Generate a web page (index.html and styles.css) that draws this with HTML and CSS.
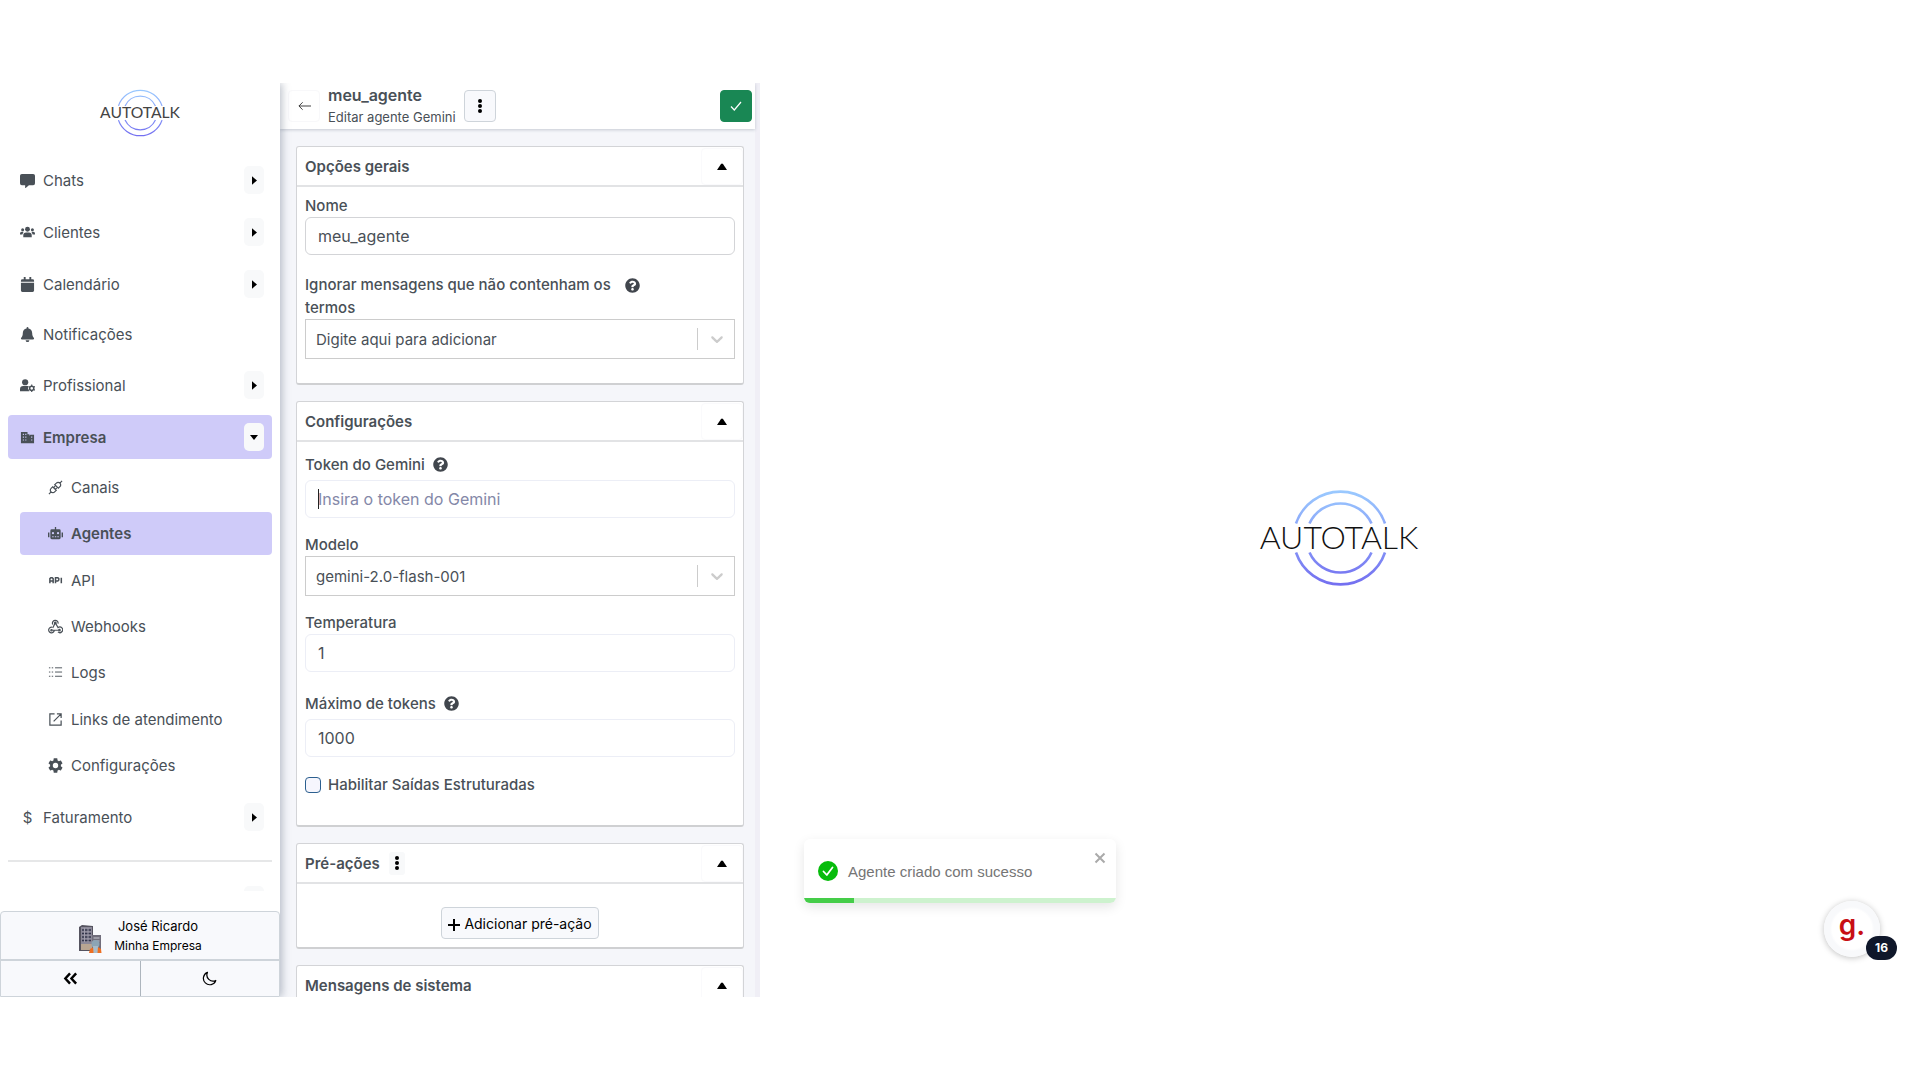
FILE: index.html
```html
<!DOCTYPE html>
<html lang="pt-BR">
<head>
  <meta charset="UTF-8" />
  <meta name="viewport" content="width=device-width, initial-scale=1.0"/>
  <title>Autotalk - Editar agente</title>
  <link rel="stylesheet" href="styles.css">
</head>
<body>

<!-- shared shapes -->
<svg class="defs" width="0" height="0" aria-hidden="true">
  <defs>
    <linearGradient id="ring" gradientUnits="userSpaceOnUse" x1="0" y1="0" x2="0" y2="98">
      <stop offset="0" stop-color="#9bcbff"/>
      <stop offset="1" stop-color="#736df0"/>
    </linearGradient>
  </defs>
  <symbol id="right" viewBox="0 0 6 10"><path d="M0 0v10l6-5z"/></symbol>
  <symbol id="down" viewBox="0 0 10 6"><path d="M0 0h10L5 6z"/></symbol>
  <symbol id="up" viewBox="0 0 10 7"><path d="M0 7h10L6 1Q5 0 4 1z"/></symbol>
  <symbol id="dots" viewBox="0 0 4 14"><circle cx="2" cy="2" r="2"/><circle cx="2" cy="7" r="2"/><circle cx="2" cy="12" r="2"/></symbol>
  <symbol id="chevron" viewBox="0 0 20 20"><path d="M4.516 7.548c0.436-0.446 1.043-0.481 1.576 0l3.908 3.747 3.908-3.747c0.533-0.481 1.141-0.446 1.574 0 0.436 0.445 0.408 1.197 0 1.615-0.406 0.418-4.695 4.502-4.695 4.502-0.217 0.223-0.502 0.335-0.787 0.335s-0.570-0.112-0.789-0.335c0 0-4.287-4.084-4.695-4.502s-0.436-1.170 0-1.615z"/></symbol>
  <symbol id="help" viewBox="0 0 512 512"><path d="M504 256c0 137-111 248-248 248S8 393 8 256 119 8 256 8s248 111 248 248zM262.700 90c-54.500 0-89.300 23-116.500 63.800-3.500 5.300-2.400 12.400 2.700 16.300l34.700 26.300c5.200 3.900 12.600 3 16.700-2.100 17.900-22.700 30.100-35.800 57.300-35.800 20.400 0 45.700 13.100 45.700 33 0 15-12.400 22.700-32.500 34C247.100 238.500 216 254.900 216 296v4c0 6.600 5.400 12 12 12h56c6.600 0 12-5.400 12-12v-1.300c0-28.500 83.200-29.600 83.200-106.700 0-58-60.200-102-116.500-102zM256 338c-25.400 0-46 20.600-46 46s20.600 46 46 46 46-20.600 46-46-20.600-46-46-46z"/></symbol>
  <symbol id="gear" viewBox="2 2 20 20"><path d="M19.140 12.940c.04-.3.060-.61.060-.94s-.02-.64-.07-.94l2.030-1.580c.18-.14.23-.41.120-.61l-1.920-3.320c-.12-.22-.37-.29-.59-.22l-2.390.96c-.5-.38-1.030-.7-1.620-.94l-.36-2.540c-.04-.24-.24-.41-.48-.41h-3.840c-.24 0-.43.17-.47.410l-.36 2.540c-.59.24-1.130.57-1.620.94l-2.390-.96c-.22-.08-.47 0-.59.220L2.740 8.870c-.12.21-.08.47.120.610l2.030 1.580c-.05.3-.09.63-.09.940s.02.640.07.940l-2.030 1.580c-.18.140-.23.410-.12.610l1.920 3.320c.12.220.370.290.590.220l2.390-.96c.5.380 1.030.700 1.620.940l.36 2.540c.05.240.240.410.480.410h3.840c.240 0 .440-.17.470-.41l.36-2.540c.59-.24 1.130-.56 1.620-.94l2.390.96c.220.080.470 0 .590-.22l1.920-3.320c.12-.22.070-.47-.12-.61l-2.010-1.580zM12 15.600a3.600 3.600 0 1 1 0-7.200 3.600 3.600 0 0 1 0 7.200z"/></symbol>
</svg>

<div class="app">
  <aside class="sidebar">
    <a class="brand" href="#" aria-label="Autotalk">
      <svg class="logo" viewBox="0 0 160 98">
        <path fill="none" stroke="url(#ring)" stroke-width="2.6" d="M36 34.500a47 47 0 0 1 89 0M49.500 34.500a34 34 0 0 1 62 0M36 63.500a47 47 0 0 0 89 0M49.500 63.500a34 34 0 0 0 62 0"/>
        <text x="80" y="60" text-anchor="middle" class="logo-text small">AUTOTALK</text>
      </svg>
    </a>

    <nav class="menu">
      <div class="item">
        <a href="#"><svg class="icon" viewBox="0 0 16 16"><path d="M2 1h12a2 2 0 0 1 2 2v8a2 2 0 0 1-2 2H9.500L5.500 16.500V13H2a2 2 0 0 1-2-2V3a2 2 0 0 1 2-2z"/></svg>Chats</a>
        <button class="toggle" aria-label="Abrir Chats"><svg class="tri"><use href="#right"/></svg></button>
      </div>
      <div class="item">
        <a href="#"><svg class="icon" viewBox="0 0 16 16"><circle cx="8" cy="4.500" r="2.600"/><circle cx="2.800" cy="5" r="1.600"/><circle cx="13.200" cy="5" r="1.600"/><path d="M3.500 13v-2a3 3 0 0 1 3-3h3a3 3 0 0 1 3 3v2zM0 10V9a1.800 1.800 0 0 1 1.800-1.800h2L2.500 10zM16 10V9a1.800 1.800 0 0 0-1.800-1.800h-2L13.500 10z"/></svg>Clientes</a>
        <button class="toggle" aria-label="Abrir Clientes"><svg class="tri"><use href="#right"/></svg></button>
      </div>
      <div class="item">
        <a href="#"><svg class="icon" viewBox="0 0 16 16"><path d="M1 5V4a1.500 1.500 0 0 1 1.500-1.500H4V0h2v2.500h4V0h2v2.500h1.500A1.500 1.500 0 0 1 15 4v1zM1 6h14v8.500a1.500 1.500 0 0 1-1.500 1.500h-11A1.500 1.500 0 0 1 1 14.500z"/></svg>Calendário</a>
        <button class="toggle" aria-label="Abrir Calendário"><svg class="tri"><use href="#right"/></svg></button>
      </div>
      <div class="item plain">
        <a href="#"><svg class="icon" viewBox="0 0 16 16"><path d="M7 1a1 1 0 0 1 2 0v.6c2.500.5 4 2.400 4 4.900 0 3 .8 4.100 1.700 5 .7.800.2 1.700-.7 1.700H2c-.9 0-1.400-.9-.7-1.700.9-.9 1.700-2 1.700-5 0-2.500 1.500-4.400 4-4.900zM6 14h4a2 2 0 0 1-4 0z"/></svg>Notificações</a>
      </div>
      <div class="item">
        <a href="#"><svg class="icon" viewBox="0 0 16 16"><circle cx="5.500" cy="4.500" r="3.300"/><path d="M0 14v-2a3.500 3.500 0 0 1 3.500-3.500h4c.6 0 1 .1 1.400.3A5 5 0 0 0 10 14z"/><circle cx="12.500" cy="11" r="2.200" fill="none" stroke="currentColor" stroke-width="1.600"/><path d="M11.900 7h1.200v1.500h-1.200zM11.900 13.500h1.200V15h-1.200zM8.800 9.500l.6-1 1.300.8-.6 1zM14.300 12.700l.6-1 1.300.8-.6 1zM9.400 13.500l-.6-1 1.300-.8.6 1zM14.900 10.300l-.6-1 1.300-.8.6 1z"/></svg>Profissional</a>
        <button class="toggle" aria-label="Abrir Profissional"><svg class="tri"><use href="#right"/></svg></button>
      </div>
      <div class="item active">
        <a href="#"><svg class="icon" viewBox="0 0 16 16"><path fill-rule="evenodd" d="M1 2h7v2.500h2V14H1zM11 5h4v9h-5V6zM3 4v1.300h1.200V4zM5.600 4v1.300h1.200V4zM3 7v1.300h1.200V7zM5.600 7v1.300h1.200V7zM3 10v1.300h1.200V10zM5.600 10v1.300h1.200V10zM11.900 7v1.200h1.200V7zM11.900 10v1.200h1.200V10z"/></svg>Empresa</a>
        <button class="toggle" aria-label="Fechar Empresa"><svg class="tri-down"><use href="#down"/></svg></button>
      </div>
      <div class="submenu">
        <a href="#"><svg class="icon line" viewBox="0 0 16 16"><path d="M1 15l2.300-2.300M3.300 12.700a2.600 2.600 0 0 1 0-3.800L5 7.200l3.800 3.800-1.700 1.700a2.600 2.600 0 0 1-3.800 0zM15 1l-2.300 2.300M12.700 3.300a2.600 2.600 0 0 0-3.800 0L7.200 5 11 8.800l1.700-1.700a2.600 2.600 0 0 0 0-3.800zM6 8.200l1.500-1.500M7.800 10l1.500-1.500"/></svg>Canais</a>
        <a class="active" href="#"><svg class="icon" viewBox="0 0 16 16"><path fill-rule="evenodd" d="M7.300 1h1.400v2.500H12A1.500 1.500 0 0 1 13.500 5v7.500A1.500 1.500 0 0 1 12 14H4a1.500 1.500 0 0 1-1.500-1.500V5A1.500 1.500 0 0 1 4 3.500h3.300zM0 7h1.500v5H0zM14.500 7H16v5h-1.500zM5.300 6.500a1.200 1.200 0 1 0 0 2.400 1.200 1.200 0 0 0 0-2.400zM10.700 6.500a1.200 1.200 0 1 0 0 2.400 1.200 1.200 0 0 0 0-2.400zM4.500 11v1h1.500v-1zM7.300 11v1h1.500v-1zM10 11v1h1.500v-1z"/></svg>Agentes</a>
        <a href="#"><svg class="icon line bold" viewBox="0 0 16 16"><path d="M2 11V6l1-1h1.500l1 1v5M2 8.500h3.500M8 11V5h2.500l1 1v1.500l-1 1H8M14.200 5v6"/></svg>API</a>
        <a href="#"><svg class="icon line" viewBox="0 0 16 16"><path d="M5.100 5.800a3 3 0 1 1 5.600-.8M7.800 4l2.900 5.200a3 3 0 1 1-.1 4.500M7.800 4L5 9.500M5.300 12h5.900M4.300 8.800a3 3 0 1 0 2.400 3.300"/><circle cx="7.800" cy="4.200" r=".8"/><circle cx="3.800" cy="12" r=".8"/><circle cx="12.200" cy="11.900" r=".8"/></svg>Webhooks</a>
        <a href="#"><svg class="icon line thin" viewBox="0 0 16 16"><path d="M1 3h1.500M4 3h1.500M7.500 3H15M1 7.500h1.500M4 7.500h1.500M7.500 7.500H15M1 12h1.500M4 12h1.500M7.500 12H15"/></svg>Logs</a>
        <a href="#"><svg class="icon line" viewBox="0 0 16 16"><path d="M7 2H2v12h12V9M9.500 2H14v4.500M14 2L6 10"/></svg>Links de atendimento</a>
        <a href="#"><svg class="icon"><use href="#gear"/></svg>Configurações</a>
      </div>
      <div class="item">
        <a href="#"><span class="icon money">$</span>Faturamento</a>
        <button class="toggle" aria-label="Abrir Faturamento"><svg class="tri"><use href="#right"/></svg></button>
      </div>
      <hr>
      <div class="item"><button class="toggle" aria-label="Abrir menu"></button></div>
    </nav>

    <footer class="account">
      <button class="user">
        <svg class="avatar" viewBox="0 0 24 28">
          <path fill="#55535f" d="M1 2l3-2 11 1v25H1z"/>
          <path fill="#8c8998" d="M3 2h11v21H3z"/>
          <path stroke="#34374c" stroke-width="1.600" d="M4 5h9M4 8.500h9M4 12h9M4 15.500h9"/>
          <path stroke="#a19fae" stroke-width="1" d="M6.500 3v14M10 3v14"/>
          <path fill="#b9a692" d="M3 19h11v6H3z"/>
          <path fill="#716e7c" d="M14 10h9v15h-9z"/>
          <path stroke="#c9c9d2" stroke-width="1.200" d="M15.500 13h6M15.500 16h6"/>
          <path fill="#ee6f22" d="M11 28l1-4 4-2h4l3 2 .5 4z"/>
          <circle cx="17.500" cy="19" r="4" fill="#8ca5b5"/>
          <path fill="#a9bcc8" d="M15 21h5l-.5 7h-4z"/>
        </svg>
        <span class="names"><span>José Ricardo</span><small>Minha Empresa</small></span>
      </button>
      <div class="tools">
        <button aria-label="Recolher menu"><svg class="tool" viewBox="0 0 16 16"><path fill="none" stroke="#000" stroke-width="2.600" d="M7.500 2.500L2.500 8l5 5.500M14 2.500L9 8l5 5.500"/></svg></button>
        <button aria-label="Modo escuro"><svg class="tool" viewBox="0 0 16 16"><path fill="none" stroke="#000" stroke-width="1.300" stroke-linejoin="round" d="M5.800 1.500a6.800 6.800 0 1 0 8.900 8.600A6.600 6.600 0 0 1 5.800 1.500z"/></svg></button>
      </div>
    </footer>
  </aside>

  <section class="panel">
    <header class="panel-head">
      <button class="btn ghost" aria-label="Voltar"><svg class="arrow" viewBox="0 0 14 10"><path fill="none" stroke="#333" d="M14 5H1M5 1L1 5l4 4"/></svg></button>
      <div class="titles">
        <h1>meu_agente</h1>
        <p>Editar agente Gemini</p>
      </div>
      <button class="btn" aria-label="Mais opções"><svg class="dots"><use href="#dots"/></svg></button>
      <button class="btn save" aria-label="Salvar"><svg class="check" viewBox="0 0 12 10"><path fill="none" stroke="#fff" stroke-width="1.200" d="M1 5.500L4.300 9 11 1"/></svg></button>
    </header>

    <form class="cards">
      <section class="card general">
        <div class="card-head"><h2>Opções gerais</h2><button type="button" class="fold" aria-label="Recolher opções gerais"><svg class="tri-up"><use href="#up"/></svg></button></div>
        <div class="card-body">
          <label for="nome">Nome</label>
          <input class="strong" id="nome" type="text" value="meu_agente">
          <div class="label-row wide"><label for="termos">Ignorar mensagens que não contenham os termos</label><svg class="help"><use href="#help"/></svg></div>
          <div class="select">
            <select id="termos"><option>Digite aqui para adicionar</option></select>
            <span class="caret"><svg><use href="#chevron"/></svg></span>
          </div>
        </div>
      </section>

      <section class="card config">
        <div class="card-head"><h2>Configurações</h2><button type="button" class="fold" aria-label="Recolher configurações"><svg class="tri-up"><use href="#up"/></svg></button></div>
        <div class="card-body">
          <div class="label-row"><label for="token">Token do Gemini</label><svg class="help"><use href="#help"/></svg></div>
          <div class="field"><input id="token" type="text" placeholder="Insira o token do Gemini"><span class="cursor"></span></div>
          <label class="spaced" for="modelo">Modelo</label>
          <div class="select">
            <select id="modelo"><option>gemini-2.0-flash-001</option></select>
            <span class="caret"><svg><use href="#chevron"/></svg></span>
          </div>
          <label class="spaced" for="temp">Temperatura</label>
          <input id="temp" type="text" value="1">
          <div class="label-row"><label for="max">Máximo de tokens</label><svg class="help"><use href="#help"/></svg></div>
          <input id="max" type="text" value="1000">
          <div class="check-row"><input id="saidas" type="checkbox"><label for="saidas">Habilitar Saídas Estruturadas</label></div>
        </div>
      </section>

      <section class="card actions">
        <div class="card-head"><h2>Pré-ações</h2><button type="button" class="mini" aria-label="Opções de pré-ações"><svg class="dots"><use href="#dots"/></svg></button><button type="button" class="fold" aria-label="Recolher pré-ações"><svg class="tri-up"><use href="#up"/></svg></button></div>
        <div class="card-body">
          <button type="button" class="btn add"><svg class="plus" viewBox="0 0 12 12"><path stroke="#000" stroke-width="2" d="M6 0v12M0 6h12"/></svg>Adicionar pré-ação</button>
        </div>
      </section>

      <section class="card">
        <div class="card-head"><h2>Mensagens de sistema</h2><button type="button" class="fold" aria-label="Recolher mensagens"><svg class="tri-up"><use href="#up"/></svg></button></div>
        <div class="card-body"></div>
      </section>
    </form>
  </section>

  <main class="stage">
    <svg class="logo-big" viewBox="0 0 160 98">
      <path fill="none" stroke="url(#ring)" stroke-width="2.6" d="M36 34.500a47 47 0 0 1 89 0M49.500 34.500a34 34 0 0 1 62 0M36 63.500a47 47 0 0 0 89 0M49.500 63.500a34 34 0 0 0 62 0"/>
      <text x="79" y="60" text-anchor="middle" class="logo-text">AUTOTALK</text>
    </svg>

    <div class="toast" role="alert">
      <svg class="ok" viewBox="0 0 20 20"><circle cx="10" cy="10" r="10" fill="#07bc0c"/><path fill="none" stroke="#fff" stroke-width="1.800" stroke-linecap="round" stroke-linejoin="round" d="M5.500 10.500l3.300 3.500 5.700-7.500"/></svg>
      <span>Agente criado com sucesso</span>
      <button class="close" aria-label="Fechar"><svg viewBox="0 0 12 12"><path stroke="#aaa" stroke-width="2" d="M1.500 1.500l9 9M10.500 1.500l-9 9"/></svg></button>
      <div class="progress"><div class="bar" style="width: 16%"></div></div>
    </div>

    <button class="fab"><span class="fab-logo">g.</span><span class="badge">16</span></button>
  </main>
</div>

</body>
</html>
```

FILE: styles.css
```css
* {
  box-sizing: border-box;
}

body {
  margin: 0;
  padding: 83px 0;
  height: 100vh;
  background: #fff;
  color: #495057;
  font-family: Inter, "Liberation Sans", sans-serif;
  font-size: 15px;
}

button {
  font: inherit;
  color: #000;
  padding: 0;
  border: none;
  background: none;
  cursor: pointer;
}

h1, h2, p {
  margin: 0;
}

.defs {
  position: absolute;
}

.logo-text {
  font-family: Lato, sans-serif;
  font-weight: 300;
  font-size: 32px;
  fill: #111;
}

.logo-text.small {
  font-weight: 400;
  fill: #444;
}

.app {
  display: flex;
  height: 100%;
  overflow: hidden;
}

/* sidebar */
.sidebar {
  position: relative;
  z-index: 1;
  flex: 0 0 280px;
  display: flex;
  flex-direction: column;
  background: #fff;
  box-shadow: 2px 0 8px rgba(60, 75, 100, 0.35);
}

.brand {
  display: flex;
  justify-content: center;
  padding: 6px 0 21px;
}

.logo {
  width: 80px;
  height: 48px;
  overflow: visible;
}

.menu {
  flex: 1;
  min-height: 0;
  overflow: hidden;
  display: flex;
  flex-direction: column;
  gap: 8px;
  margin-bottom: 20px;
  padding: 0 8px;
}

.item {
  flex: none;
  display: flex;
  align-items: center;
  justify-content: space-between;
  height: 44px;
  padding: 0 8px 0 12px;
  border-radius: 4px;
}

.item.plain {
  height: 41px;
}

.item a,
.submenu a {
  display: flex;
  align-items: center;
  gap: 8px;
  color: #495057;
  text-decoration: none;
}

.item.active,
.submenu .active {
  background: #cfcbf9;
  font-weight: 600;
}

.icon {
  width: 15px;
  height: 15px;
  fill: currentColor;
}

.icon.line {
  fill: none;
  stroke: currentColor;
  stroke-width: 1.3;
}

.icon.bold {
  stroke-width: 1.6;
}

.icon.thin {
  stroke-width: 1;
}

.money {
  line-height: 15px;
  text-align: center;
}

.toggle {
  display: flex;
  align-items: center;
  justify-content: center;
  width: 20px;
  height: 28px;
  margin-left: auto;
  border-radius: 5px;
  background: #f8f9fa;
}

.tri {
  width: 5px;
  height: 9px;
}

.tri-down {
  width: 8px;
  height: 5px;
}

.submenu {
  flex: none;
  display: grid;
  grid-auto-rows: 1fr;
  gap: 4px;
  height: 321px;
  margin: -1px 0 0 12px;
}

.submenu a {
  padding-left: 28px;
  border-radius: 4px;
}

.menu hr {
  flex: none;
  width: 100%;
  height: 2px;
  margin: 13px 0 8px;
  border: none;
  background: #e6e7e8;
}

.account {
  flex: none;
  border: 1px solid #ced4da;
  border-radius: 4px 4px 0 0;
  background: #f8f9fc;
}

.user {
  display: flex;
  align-items: center;
  justify-content: center;
  gap: 12px;
  width: 100%;
  height: 47px;
}

.avatar {
  width: 24px;
  height: 28px;
  margin-top: 7px;
}

.names {
  display: flex;
  flex-direction: column;
  font-size: 13px;
  line-height: 20px;
}

.names small {
  font-size: 12px;
}

.tools {
  display: flex;
  height: 37px;
  border-top: 2px solid #ced4da;
}

.tools button {
  flex: 1;
  display: flex;
  align-items: center;
  justify-content: center;
}

.tools button + button {
  border-left: 1px solid #adb5bd;
}

.tool {
  width: 15px;
  height: 15px;
}

/* agent form */
.panel {
  flex: 0 0 480px;
  display: flex;
  flex-direction: column;
  border-right: 5px solid #f0eff6;
  background: #f5f6fa;
}

.panel-head {
  flex: none;
  display: flex;
  align-items: center;
  gap: 8px;
  height: 46px;
  padding: 0 3px 0 8px;
  background: #fff;
  box-shadow: 0 1px 3px rgba(60, 75, 100, 0.25);
}

.btn {
  display: flex;
  align-items: center;
  justify-content: center;
  width: 32px;
  height: 32px;
  border: 1px solid #ced4da;
  border-radius: 4px;
  background: #f8f9fc;
}

.btn.ghost {
  border-color: #f8f8fa;
  background: #fff;
}

.btn.save {
  margin-left: auto;
  border-color: #198754;
  background: #198754;
}

.arrow {
  width: 13px;
  height: 10px;
}

.dots {
  width: 4px;
  height: 14px;
}

.check {
  width: 12px;
  height: 10px;
}

.titles h1 {
  font-size: 16px;
  font-weight: 600;
  line-height: 22px;
}

.titles p {
  font-size: 13px;
  line-height: 22px;
}

.cards {
  flex: 1;
  min-height: 0;
  overflow: hidden;
  padding: 17px 11px 0 16px;
}

.card {
  margin-bottom: 16px;
  border: 1px solid #d3d4d7;
  border-bottom: 2px solid #cfd0d2;
  border-radius: 3px;
  background: #fff;
}

.card-head {
  display: flex;
  align-items: center;
  height: 40px;
  padding-left: 8px;
  border-bottom: 2px solid #e2e3e5;
}

.card-head h2 {
  font-size: 15px;
  font-weight: 600;
}

.fold {
  display: flex;
  align-items: center;
  justify-content: center;
  width: 42px;
  height: 37px;
  margin-left: auto;
  border: 1px solid #fafafc;
  border-radius: 4px;
}

.tri-up {
  width: 10px;
  height: 7px;
}

.mini {
  display: flex;
  align-items: center;
  justify-content: center;
  width: 16px;
  height: 23px;
  margin-left: 9px;
  border-radius: 3px;
  background: #f8f9fa;
}

.card-body {
  padding: 7px 8px 0;
}

.card-body label {
  display: block;
  font-weight: 500;
  line-height: 23px;
}

.general .card-body {
  padding-bottom: 24px;
}

.card input[type="text"] {
  display: block;
  width: 100%;
  height: 38px;
  padding: 0 12px;
  border: 1px solid #eceef6;
  border-radius: 6px;
  background: #fff;
  color: #495057;
  font: inherit;
  font-size: 16px;
}

.card input.strong {
  border-color: #d3d4d7;
}

.card input::placeholder {
  color: #8488a8;
}

.label-row {
  display: flex;
  align-items: center;
  gap: 8px;
  margin: 20px 0 4px;
}

.label-row.wide {
  align-items: flex-start;
  margin: 18px 0 0;
}

.label-row.wide label {
  width: 312px;
}

.help {
  width: 15px;
  height: 15px;
  fill: #41464d;
}

.wide .help {
  margin-top: 5px;
}

.select,
.field {
  position: relative;
}

.select select {
  display: block;
  width: 100%;
  height: 40px;
  padding: 0 48px 0 10px;
  border: 1px solid #ccc;
  border-radius: 0;
  background: #fff;
  color: #495057;
  font: inherit;
  appearance: none;
}

.caret {
  position: absolute;
  top: 9px;
  right: 8px;
  display: flex;
  align-items: center;
  height: 22px;
  padding-left: 9px;
  border-left: 1px solid #ccc;
  pointer-events: none;
}

.caret svg {
  width: 20px;
  height: 20px;
  fill: #ccc;
}

.cursor {
  position: absolute;
  top: 9px;
  left: 13px;
  width: 1px;
  height: 20px;
  background: #222;
}

.config .card-body {
  padding: 11px 8px 29px;
}

.config .label-row:first-child {
  margin-top: 0;
}

.config .spaced {
  margin-top: 15px;
}

.check-row {
  display: flex;
  align-items: center;
  gap: 7px;
  margin-top: 16px;
}

.check-row input {
  appearance: none;
  width: 16px;
  height: 16px;
  margin: 0;
  border: 1px solid #2c5f8f;
  border-radius: 4px;
  background: #f6f6fd;
}

.actions .card-body {
  padding: 23px 8px 8px;
}

.btn.add {
  gap: 4px;
  width: 158px;
  margin: 0 auto;
  font-size: 14px;
}

.plus {
  width: 12px;
  height: 12px;
  margin-top: 3px;
}

/* right side */
.stage {
  position: relative;
  flex: 1;
  display: flex;
  align-items: center;
  justify-content: center;
  padding-bottom: 4px;
}

.logo-big {
  width: 160px;
  height: 98px;
  overflow: visible;
}

.toast {
  position: absolute;
  left: 44px;
  bottom: 94px;
  display: flex;
  align-items: center;
  gap: 10px;
  width: 312px;
  height: 64px;
  padding: 0 14px;
  overflow: hidden;
  border-radius: 6px;
  background: #fff;
  color: #757575;
  font-family: "Liberation Sans", sans-serif;
  box-shadow: 0 4px 12px rgba(0, 0, 0, 0.1);
}

.ok {
  width: 20px;
  height: 20px;
}

.close {
  align-self: flex-start;
  margin: 11px -4px 0 auto;
}

.close svg {
  width: 12px;
  height: 12px;
}

.progress {
  position: absolute;
  left: 0;
  right: 0;
  bottom: 0;
  height: 5px;
  background: #cdf2ce;
}

.bar {
  height: 100%;
  background: #45cd49;
}

.fab {
  position: absolute;
  right: 40px;
  bottom: 40px;
  width: 56px;
  height: 56px;
  border-radius: 50%;
  background: radial-gradient(circle, #fff 50%, #f8f9fb 56%);
  box-shadow: 0 1px 6px rgba(0, 0, 0, 0.25);
}

.fab-logo {
  display: block;
  padding-bottom: 8px;
  color: #c80f14;
  font-size: 28px;
  font-weight: 600;
  line-height: 32px;
}

.badge {
  position: absolute;
  right: -17px;
  bottom: -3px;
  width: 31px;
  border-radius: 12px;
  background: #0f172a;
  color: #fff;
  font-size: 12px;
  font-weight: 700;
  line-height: 24px;
}
```
